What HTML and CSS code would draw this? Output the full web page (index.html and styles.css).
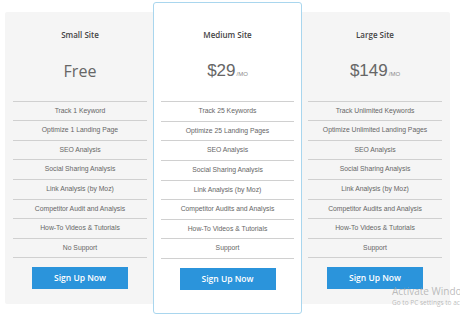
FILE: index.html
```
<!DOCTYPE html>
<html>
<head>
<meta charset="utf-8">
<link rel="stylesheet" href="styles.css">
</head>
<body>
<div class="pricing">
  <div class="card">
    <h2 class="title">Small Site</h2>
    <div class="price free">Free</div>
    <ul class="features">
      <li>Track 1 Keyword</li>
      <li>Optimize 1 Landing Page</li>
      <li>SEO Analysis</li>
      <li>Social Sharing Analysis</li>
      <li>Link Analysis (by Moz)</li>
      <li>Competitor Audit and Analysis</li>
      <li>How-To Videos &amp; Tutorials</li>
      <li>No Support</li>
    </ul>
    <a class="btn">Sign Up Now</a>
  </div>
  <div class="card featured">
    <h2 class="title">Medium Site</h2>
    <div class="price">$29<span class="per">/MO</span></div>
    <ul class="features">
      <li>Track 25 Keywords</li>
      <li>Optimize 25 Landing Pages</li>
      <li>SEO Analysis</li>
      <li>Social Sharing Analysis</li>
      <li>Link Analysis (by Moz)</li>
      <li>Competitor Audits and Analysis</li>
      <li>How-To Videos &amp; Tutorials</li>
      <li>Support</li>
    </ul>
    <a class="btn">Sign Up Now</a>
  </div>
  <div class="card">
    <h2 class="title">Large Site</h2>
    <div class="price">$149<span class="per">/MO</span></div>
    <ul class="features">
      <li>Track Unlimited Keywords</li>
      <li>Optimize Unlimited Landing Pages</li>
      <li>SEO Analysis</li>
      <li>Social Sharing Analysis</li>
      <li>Link Analysis (by Moz)</li>
      <li>Competitor Audits and Analysis</li>
      <li>How-To Videos &amp; Tutorials</li>
      <li>Support</li>
    </ul>
    <a class="btn">Sign Up Now</a>
  </div>
</div>
<div class="watermark">
  <div class="wm-title">Activate Windows</div>
  <div class="wm-sub">Go to PC settings to activate Windows.</div>
</div>
</body>
</html>
```
FILE: styles.css
```
html, body {
  margin: 0;
  padding: 0;
  background: #ffffff;
  width: 460px;
  height: 320px;
  overflow: hidden;
}

.pricing {
  display: flex;
  align-items: center;
  padding: 2px 0 0 5px;
  height: 312px;
}

.card {
  width: 150px;
  box-sizing: border-box;
  background: #f5f5f5;
  padding: 17px 8px 15px;
  display: flex;
  flex-direction: column;
  align-items: stretch;
  border-radius: 2px;
}

.card.featured {
  width: 149px;
  background: #ffffff;
  border: 1px solid #a9d6ee;
  border-radius: 3px;
  padding: 26px 7px 23px;
  margin: 0 -2px;
  z-index: 1;
  position: relative;
}

.title {
  margin: 0;
  font-family: "Open Sans", "Liberation Sans", sans-serif;
  font-weight: 600;
  font-size: 8px;
  line-height: 12px;
  color: #444444;
  text-align: center;
}

.price {
  margin-top: 20px;
  height: 20px;
  line-height: 20px;
  font-family: "Liberation Sans", Arial, sans-serif;
  font-size: 17px;
  color: #666666;
  text-align: center;
}

.price.free {
  font-family: "Open Sans", "Liberation Sans", sans-serif;
  font-size: 16px;
}

.per {
  font-size: 6px;
  color: #8a8a8a;
  margin-left: 1px;
}

.features {
  list-style: none;
  margin: 20px 0 0;
  padding: 0;
  border-top: 1px solid #d0d0d0;
}

.features li {
  height: 18.6px;
  line-height: 18.6px;
  border-bottom: 1px solid #d0d0d0;
  font-family: "Liberation Sans", Arial, sans-serif;
  font-size: 6.8px;
  color: #666666;
  text-align: center;
  white-space: nowrap;
}

.btn {
  display: block;
  align-self: center;
  margin-top: 9px;
  width: 96px;
  height: 22px;
  line-height: 22px;
  background: #2b94db;
  color: #ffffff;
  font-family: "Open Sans", "Liberation Sans", sans-serif;
  font-weight: 600;
  font-size: 8.5px;
  text-align: center;
}

.watermark {
  position: absolute;
  left: 392px;
  top: 285px;
  white-space: nowrap;
  font-family: "Open Sans", "Liberation Sans", sans-serif;
  color: rgba(160, 160, 160, 0.7);
  z-index: 5;
}

.wm-title {
  font-size: 10px;
  line-height: 13px;
}

.wm-sub {
  font-size: 6.5px;
  line-height: 9px;
}
```
